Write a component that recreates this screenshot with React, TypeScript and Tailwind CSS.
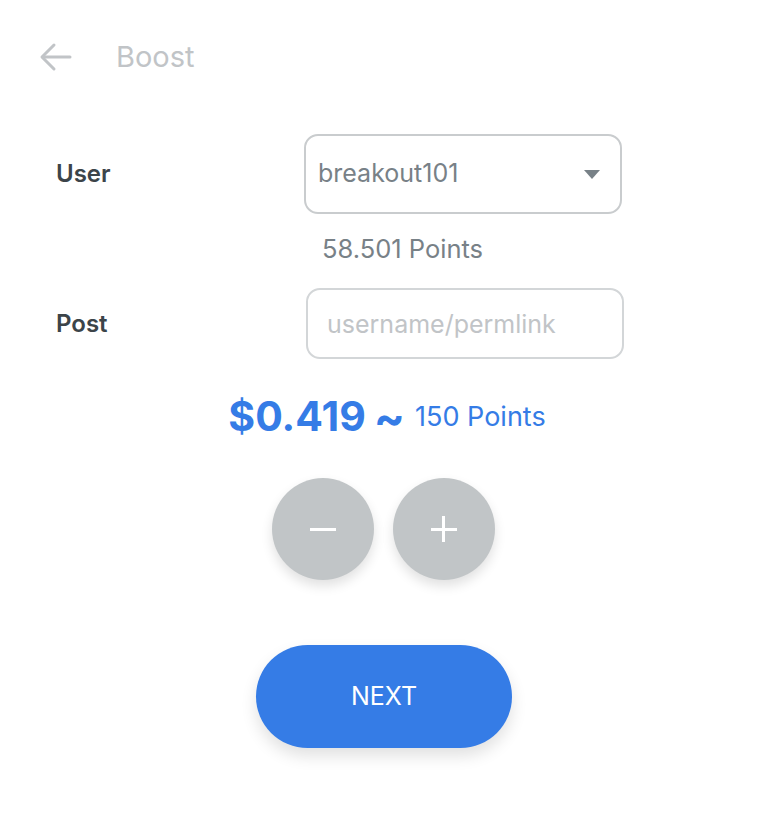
import React from "react"

function BackArrow() {
  return (
    <svg width="34" height="30" viewBox="0 0 34 30" fill="none" stroke="#c1c4c7" strokeWidth="3" strokeLinecap="round" strokeLinejoin="round">
      <path d="M31 15H4" />
      <path d="M15 3L3 15l12 12" />
    </svg>
  )
}

export default function App() {
  return (
    <div className="w-[768px] h-[813px] bg-white flex flex-col" style={{ fontFamily: "Inter, 'Liberation Sans', sans-serif" }}>
      {/* header */}
      <div className="h-[114px] flex items-center pl-[39px]">
        <BackArrow />
        <span className="ml-[43px] text-[29px] text-[#c1c4c7]">Boost</span>
      </div>

      {/* user */}
      <div className="mt-[20px] flex items-center pl-[56px]">
        <span className="w-[248px] text-[24px] font-semibold text-[#3c4449]">User</span>
        <div className="w-[318px] h-[80px] rounded-[14px] border-2 border-[#c9ccce] flex items-center justify-between pl-[12px] pr-[20px]">
          <span className="text-[25px] text-[#788187]">breakout101</span>
          <svg width="16" height="9" viewBox="0 0 16 9">
            <path d="M0 0h16L8 9z" fill="#788187" />
          </svg>
        </div>
      </div>
      <div className="mt-[17px] pl-[322px] h-[36px] flex items-center text-[25.5px] text-[#788187]">58.501 Points</div>

      {/* post */}
      <div className="mt-[21px] flex items-center pl-[56px]">
        <span className="w-[250px] text-[24px] font-semibold text-[#3c4449]">Post</span>
        <input
          placeholder="username/permlink"
          className="w-[318px] h-[71px] rounded-[14px] border-2 border-[#d3d6d8] pl-[19px] text-[25px] text-[#3c4449] placeholder:text-[#c1c4c7] outline-none"
        />
      </div>

      {/* amount */}
      <div className="mt-[34px] h-[48px] flex items-center justify-center pl-[6px] text-[#357ce6]">
        <span className="text-[41px] font-bold">$0.419</span>
        <span className="ml-[8px] text-[46px] font-bold leading-none">~</span>
        <span className="ml-[10px] text-[27px]">150 Points</span>
      </div>

      {/* stepper */}
      <div className="mt-[37px] flex justify-center gap-[19px] pr-[2px]">
        <button className="w-[102px] h-[102px] rounded-full bg-[#c1c5c7] shadow-[0_6px_12px_rgba(0,0,0,0.12)] flex items-center justify-center">
          <span className="block w-[26px] h-[3px] bg-white" />
        </button>
        <button className="w-[102px] h-[102px] rounded-full bg-[#c1c5c7] shadow-[0_6px_12px_rgba(0,0,0,0.12)] flex items-center justify-center relative">
          <span className="block w-[26px] h-[3px] bg-white" />
          <span className="absolute block w-[3px] h-[26px] bg-white" />
        </button>
      </div>

      {/* next */}
      <div className="mt-[65px] flex justify-center">
        <button className="w-[256px] h-[103px] rounded-full bg-[#357ce6] text-white text-[25px] shadow-[0_8px_16px_rgba(0,0,0,0.12)]">
          NEXT
        </button>
      </div>
    </div>
  )
}
